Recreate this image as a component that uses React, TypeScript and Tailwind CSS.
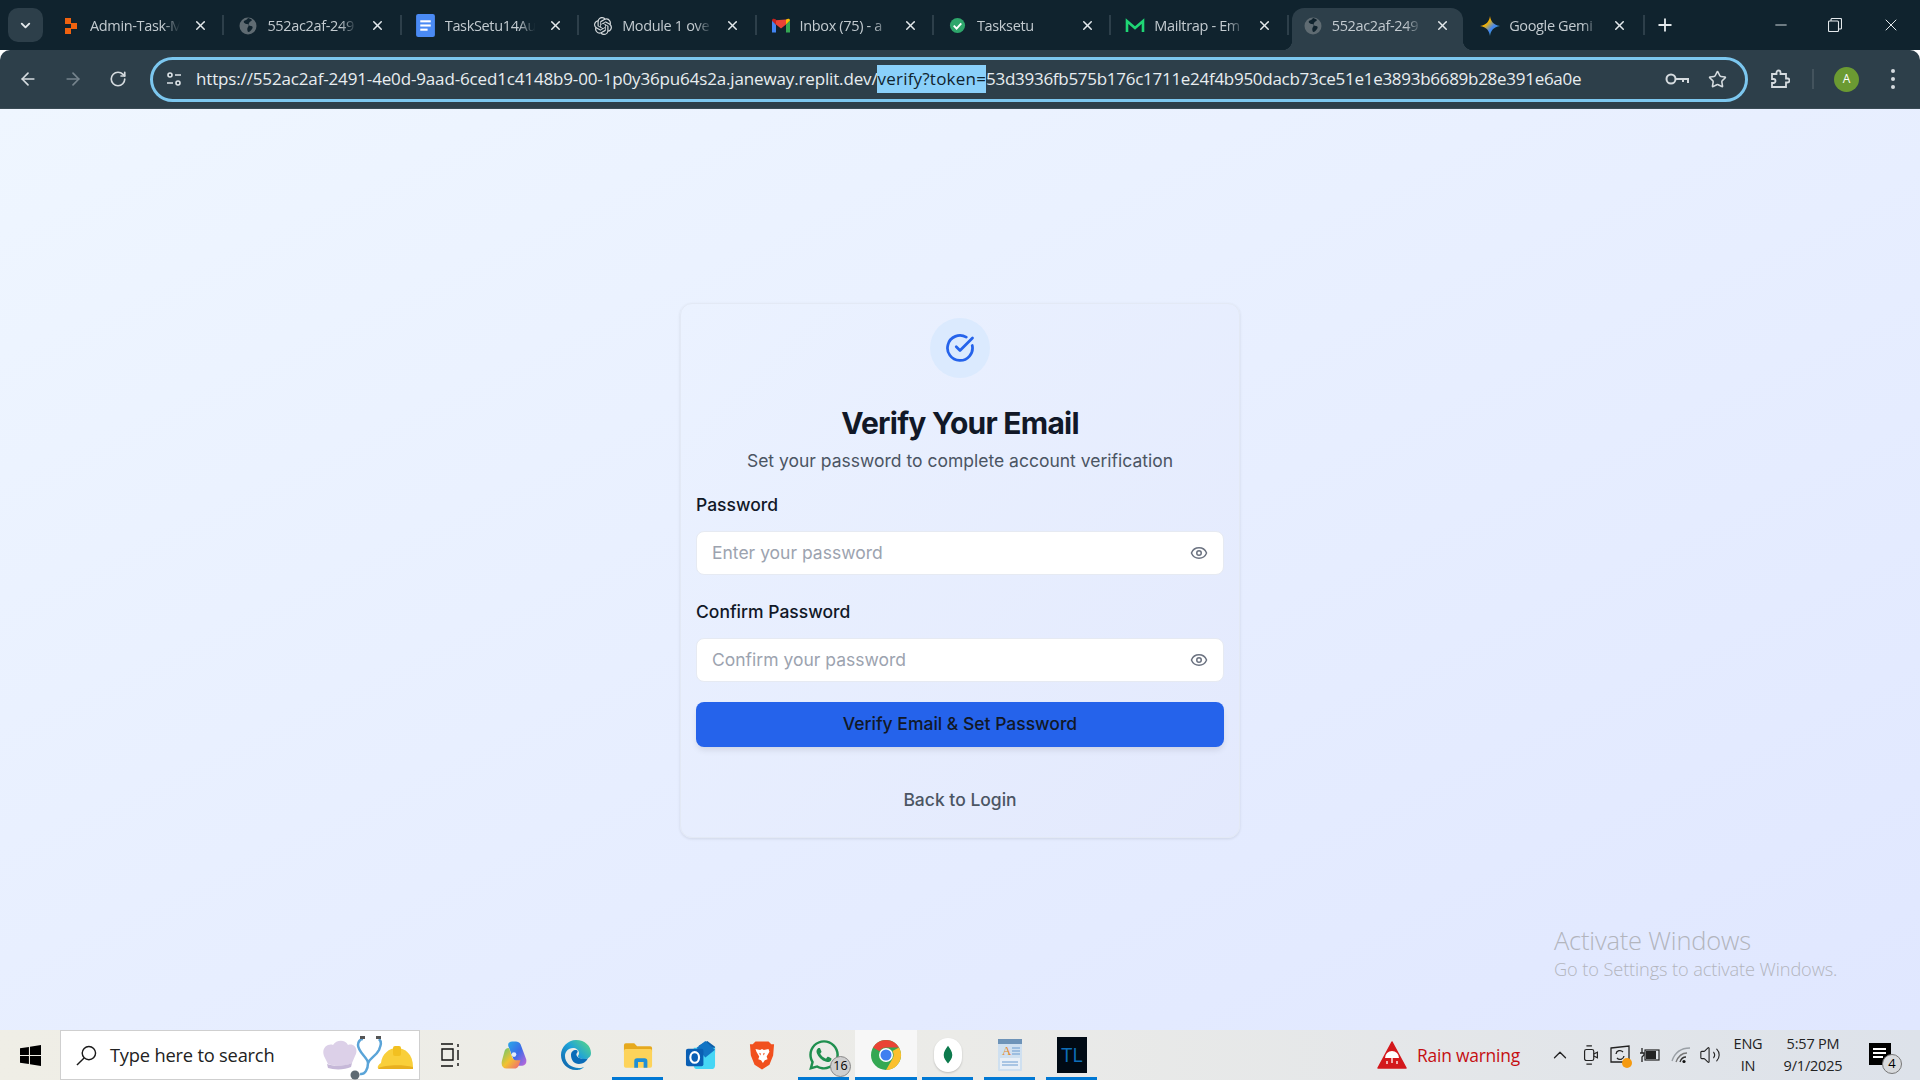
import React from "react";
import { ArrowLeft, ArrowRight, ChevronDown, ChevronUp, CircleCheckBig, Eye, Minus, Plus, RotateCw, Star, X, Volume2 } from "lucide-react";
import { SiOpenai } from "react-icons/si";
import { FaWhatsapp } from "react-icons/fa";

const Globe = () => (
  <svg viewBox="0 0 18 18" className="w-[18px] h-[18px]">
    <circle cx="9" cy="9" r="8.5" fill="#5f6b72" />
    <path d="M9 1c-1 2-3 2-4 3s1 3 3 3 2 2 1 3-1 3 0 5c2 0 3-2 4-3s1-3-1-3-3-1-2-3 3-2 3-3c-1-1-3-2-4-2z" fill="#10232e" />
  </svg>
);
const Asana = () => (
  <svg viewBox="0 0 18 18" className="w-[18px] h-[18px]">
    <rect x="3" y="1" width="6" height="6" fill="#f0620f" />
    <rect x="9" y="6" width="6" height="6" fill="#f0620f" />
    <rect x="3" y="11" width="6" height="6" fill="#f0620f" />
  </svg>
);
const Docs = () => (
  <svg viewBox="0 0 18 22" className="w-[19px] h-[23px]">
    <rect x="0" y="0" width="18" height="22" rx="2" fill="#4a8af4" />
    <rect x="4" y="6" width="10" height="2" fill="#fff" />
    <rect x="4" y="10" width="10" height="2" fill="#fff" />
    <rect x="4" y="14" width="7" height="2" fill="#fff" />
  </svg>
);
const Gmail = () => (
  <svg viewBox="0 0 18 14" className="w-[18px] h-[15px]">
    <path d="M0 2v12h4V6z" fill="#4285f4" />
    <path d="M18 2v12h-4V6z" fill="#34a853" />
    <path d="M0 2l4 4 5 4 5-4V1z" fill="#ea4335" />
    <path d="M14 1v5l4-4c0-2-2-2.500-4-1z" fill="#fbbc04" />
    <path d="M0 2c0-2 2-2.500 4-1v5z" fill="#c5221f" />
  </svg>
);
const Tasksetu = () => (
  <svg viewBox="0 0 18 18" className="w-[17px] h-[17px]">
    <circle cx="9" cy="9" r="8" fill="#2ea66b" />
    <path d="M5 9.200l3 3 5-5.500" stroke="#fff" strokeWidth="2" fill="none" />
  </svg>
);
const Mailtrap = () => (
  <svg viewBox="0 0 20 16" className="w-[20px] h-[16px]">
    <path d="M2 14V3l8 7 8-7v11" stroke="#1fd675" strokeWidth="2.600" fill="none" strokeLinejoin="miter" />
  </svg>
);
const Gemini = () => (
  <svg viewBox="0 0 20 20" className="w-[20px] h-[20px]">
    <defs>
      <linearGradient id="gem" x1="0" y1="0" x2="1" y2="1">
        <stop offset="0" stopColor="#e8453c" />
        <stop offset="0.35" stopColor="#f4b400" />
        <stop offset="0.6" stopColor="#4285f4" />
        <stop offset="1" stopColor="#34a853" />
      </linearGradient>
    </defs>
    <path d="M10 0c.8 5.500 3.500 9 10 10-6.500 1-9.200 4.500-10 10-.8-5.500-3.500-9-10-10 6.500-1 9.200-4.500 10-10z" fill="url(#gem)" />
  </svg>
);

const tabs: { icon: React.ReactNode; title: string; active?: boolean }[] = [
  { icon: <Asana />, title: "Admin-Task-M" },
  { icon: <Globe />, title: "552ac2af-249" },
  { icon: <Docs />, title: "TaskSetu14Au" },
  { icon: <SiOpenai className="w-[18px] h-[18px] text-[#d5dadd]" />, title: "Module 1 ove" },
  { icon: <Gmail />, title: "Inbox (75) - a" },
  { icon: <Tasksetu />, title: "Tasksetu" },
  { icon: <Mailtrap />, title: "Mailtrap - Em" },
  { icon: <Globe />, title: "552ac2af-249", active: true },
  { icon: <Gemini />, title: "Google Gemi" },
];

function Tab({ t, last }: { t: (typeof tabs)[number]; last: boolean }) {
  return (
    <div className="relative w-[177.4px] h-[42px] mt-[8px] flex items-center pl-[14px] pb-[7px]">
      {t.active && (
        <>
          <span className="absolute left-[3px] right-[3px] top-0 bottom-0 bg-[#2d3f4a] rounded-t-[12px]" />
          <span className="absolute left-[-7px] bottom-0 w-[10px] h-[10px] bg-[radial-gradient(circle_at_0_0,transparent_10px,#2d3f4a_10.5px)]" />
          <span className="absolute right-[-7px] bottom-0 w-[10px] h-[10px] bg-[radial-gradient(circle_at_100%_0,transparent_10px,#2d3f4a_10.5px)]" />
        </>
      )}
      <span className="relative w-[20px] flex justify-center shrink-0">{t.icon}</span>
      <span className="relative ml-[9px] w-[94px] whitespace-nowrap text-[14.5px] text-[#c3cbd0] [font-family:'Open_Sans',sans-serif] tracking-[-0.35px] [mask-image:linear-gradient(to_right,black_78%,transparent_96%)]">
        {t.title}
      </span>
      <X className="relative ml-[9px] w-[15px] h-[15px] text-[#e4e9ec]" strokeWidth={2.4} />
      {!last && !t.active && <span className="absolute right-0 top-[7px] h-[20px] w-[2px] bg-[#2d3f4a]" />}
    </div>
  );
}

const Chrome = () => (
  <svg viewBox="0 0 32 32" className="w-[32px] h-[32px]">
    <circle cx="16" cy="16" r="15" fill="#34a853" />
    <path d="M16 1a15 15 0 0 1 13 7.500H16a7.500 7.500 0 0 0-6.500 3.700L3 8.500A15 15 0 0 1 16 1z" fill="#ea4335" />
    <path d="M29 8.500A15 15 0 0 1 16 31l6.500-11.300A7.500 7.500 0 0 0 22.500 12z" fill="#fbc02d" />
    <circle cx="16" cy="16" r="7" fill="#fff" />
    <circle cx="16" cy="16" r="5.500" fill="#3f7ff0" />
  </svg>
);
const Edge = () => (
  <svg viewBox="0 0 32 32" className="w-[32px] h-[32px]">
    <defs>
      <linearGradient id="edg" x1="0" y1="1" x2="1" y2="0">
        <stop offset="0" stopColor="#0c59a4" />
        <stop offset="0.55" stopColor="#1fa3d8" />
        <stop offset="1" stopColor="#5fdc7c" />
      </linearGradient>
    </defs>
    <path d="M16 1c9 0 15 6 15 13 0 4-3 6-7 6-3 0-6-1-6-3 0-1 1-1 1-3 0-3-3-5-6-5-5 0-8 4-8 8 0 7 6 12 14 12 2 0 4-.5 5-1-3 3-6 3-8 3C7 31 1 24 1 16 1 8 8 1 16 1z" fill="url(#edg)" />
    <path d="M11 16c0-3 2-5 5-5 2 0 2 2 1 3-2 2 1 6 7 6 1 0 3 0 4-1-1 3-5 6-9 6-5 0-8-4-8-9z" fill="#0b6cb8" />
  </svg>
);
const Copilot = () => (
  <svg viewBox="0 0 30 32" className="w-[28px] h-[31px]">
    <defs>
      <linearGradient id="cop1" x1="0" y1="0" x2="1" y2="1">
        <stop offset="0" stopColor="#2aa8e8" />
        <stop offset="0.5" stopColor="#3c6be8" />
        <stop offset="1" stopColor="#c868d8" />
      </linearGradient>
      <linearGradient id="cop2" x1="0" y1="0" x2="1" y2="1">
        <stop offset="0" stopColor="#5cc878" />
        <stop offset="0.5" stopColor="#f2c230" />
        <stop offset="1" stopColor="#f0607a" />
      </linearGradient>
    </defs>
    <path d="M13 1h4c2 0 4 1 5 3l6 16c1 4-1 7-4 7h-4c-2 0-3-1-4-3L9 6c-1-3 1-5 4-5z" fill="url(#cop1)" />
    <path d="M9 8c-2 0-3 1-4 3L2 22c-1 5 1 8 5 8h8c3 0 4-1 5-3l2-6h-5c-2 0-3-1-4-3l-2-6C10 9 10 8 9 8z" fill="url(#cop2)" />
    <circle cx="15" cy="15" r="2.500" fill="#fff" opacity="0.85" />
  </svg>
);
const Explorer = () => (
  <svg viewBox="0 0 32 28" className="w-[30px] h-[27px]">
    <path d="M1 3a2 2 0 0 1 2-2h9l3 3h14a2 2 0 0 1 2 2v4H1z" fill="#e6a91e" />
    <rect x="1" y="7" width="30" height="20" rx="2" fill="#fdd35a" />
    <path d="M12 27v-7a3 3 0 0 1 3-3h8a3 3 0 0 1 3 3v7h-4v-6h-6v6z" fill="#1f8fd6" />
  </svg>
);
const Outlook = () => (
  <svg viewBox="0 0 32 32" className="w-[31px] h-[31px]">
    <path d="M14 6l9-5 8 6v6z" fill="#0f5fa8" />
    <path d="M9 8h22v18a4 4 0 0 1-4 4H13a4 4 0 0 1-4-4z" fill="#46d6f5" />
    <path d="M12 8l9-7 10 9-10 8z" fill="#1274c4" />
    <rect x="1" y="9" width="18" height="18" rx="2" fill="#0a5fb4" />
    <ellipse cx="10" cy="18" rx="4.500" ry="5.500" fill="none" stroke="#fff" strokeWidth="2.200" />
  </svg>
);
const Brave = () => (
  <svg viewBox="0 0 28 32" className="w-[26px] h-[31px]">
    <path d="M7 1h14l3 3 3 0-1 12-4 10-8 5-8-5-4-10L1 4l3 0z" fill="#f1501e" />
    <path d="M7 9l5 1 2-1 2 1 5-1 1 3-3 5 1 3-3 1-2 3-2-3-3-1 1-3-3-5z" fill="#fff" />
    <path d="M11 13l2 1-1 2zM17 13l-2 1 1 2z" fill="#f1501e" />
  </svg>
);
const Leaf = () => (
  <div className="w-[28px] h-[34px] rounded-full bg-white flex items-center justify-center shadow-[0_1px_2px_rgba(0,0,0,0.2)]">
    <svg viewBox="0 0 14 26" className="w-[10px] h-[20px]">
      <path d="M7 0c3 4 6 8 6 13s-3 8-6 12c-3-4-6-7-6-12S4 4 7 0z" fill="#0d7a4d" />
    </svg>
  </div>
);
const Notepad = () => (
  <svg viewBox="0 0 26 34" className="w-[26px] h-[34px]">
    <rect x="1" y="1" width="24" height="32" rx="1" fill="#cfe0f0" />
    <rect x="1" y="1" width="24" height="5" fill="#6d93b8" />
    <rect x="3" y="20" width="20" height="11" fill="#e8eff7" />
    <text x="5" y="17" fontSize="13" fill="#e68a2e" fontFamily="Liberation Serif, serif">A</text>
    <path d="M15 10h8M15 13h8M15 16h8M5 24h16M5 27h16" stroke="#6a9bd0" strokeWidth="1" />
  </svg>
);

const Helper = ({ children, w = 62, line, active, cls }: { children?: React.ReactNode; w?: number; line?: boolean; active?: boolean; cls?: string }) => (
  <div className={`relative h-full flex items-center justify-center shrink-0 ${active ? "bg-[#f7f7f7]" : ""} ${cls ?? ""}`} style={{ width: w }}>
    {children}
    {line && <span className={`absolute bottom-0 h-[3px] bg-[#0078d4] ${active ? "left-0 right-0" : "left-[5px] right-[6px]"}`} />}
  </div>
);

const PasswordField = ({ placeholder }: { placeholder: string }) => (
  <div className="h-[44.5px] rounded-[8px] bg-white border border-[#e6eaf2] flex items-center pl-[15px] pr-[15px]">
    <span className="flex-1 text-[17.5px] text-[#9ca3af]">{placeholder}</span>
    <Eye className="w-[18px] h-[18px] text-[#6b7280]" strokeWidth={2} />
  </div>
);

export default function App() {
  return (
    <div className="w-[1920px] h-[1080px] overflow-hidden flex flex-col relative [font-family:Inter,sans-serif]">
      <div className="h-[50px] bg-[#10232e] flex shrink-0">
        <div className="w-[47px] flex items-start pl-[8px] pt-[8px]">
          <div className="w-[35px] h-[34px] rounded-[10px] bg-[#2d3f4a] flex items-center justify-center">
            <ChevronDown className="w-[15px] h-[15px] text-[#e4e9ec]" strokeWidth={3} />
          </div>
        </div>
        {tabs.map((t, i) => (
          <Tab key={i} t={t} last={i === tabs.length - 1} />
        ))}
        <div className="flex items-center h-full ml-[-1px]">
          <span className="w-[2px] h-[20px] bg-[#2d3f4a]" />
          <Plus className="ml-[10px] w-[20px] h-[20px] text-[#e4e9ec]" strokeWidth={2.2} />
        </div>
        <div className="ml-auto flex items-center h-full pr-[19px] text-[#e4e9ec]">
          <Minus className="w-[18px] h-[18px]" strokeWidth={1.2} />
          <svg viewBox="0 0 14 14" className="ml-[38px] w-[14px] h-[14px]" fill="none" stroke="#e4e9ec" strokeWidth="1.1">
            <rect x="0.5" y="3" width="10" height="10.500" rx="1" />
            <path d="M3 3V1.500a1 1 0 0 1 1-1h8.500a1 1 0 0 1 1 1V10a1 1 0 0 1-1 1H11" />
          </svg>
          <X className="ml-[39px] w-[20px] h-[20px]" strokeWidth={1.2} />
        </div>
      </div>

      <div className="h-[59px] bg-[#2d3f4a] rounded-t-[10px] flex items-center shrink-0 border-b border-[#3a4b55]">
        <div className="w-[150px] flex items-center pl-[18px] text-[#d5dbdf]">
          <ArrowLeft className="w-[20px] h-[20px]" strokeWidth={2} />
          <ArrowRight className="ml-[25px] w-[20px] h-[20px] text-[#76848d]" strokeWidth={2} />
          <RotateCw className="ml-[26px] w-[18px] h-[18px]" strokeWidth={2.2} />
        </div>
        <div className="w-[1598px] h-[45px] rounded-full border-[3px] border-[#7cc7ef] flex items-center pl-[13px] pr-[18px]">
          <svg viewBox="0 0 16 16" className="w-[16px] h-[16px] shrink-0" fill="none" stroke="#dde3e7" strokeWidth="1.600">
            <circle cx="4" cy="4" r="2" />
            <path d="M9 4h6M1 12h6" />
            <circle cx="12" cy="12" r="2" />
          </svg>
          <div className="ml-[14px] flex-1 whitespace-nowrap text-[17px] text-[#e8edf0] [font-family:'Open_Sans',sans-serif] flex items-center">
            <span className="tracking-[-0.15px]">https://552ac2af-2491-4e0d-9aad-6ced1c4148b9-00-1p0y36pu64s2a.janeway.replit.dev/</span>
            <span className="bg-[#8ad0fa] text-[#10232e] h-[28px] leading-[28px] tracking-[0.22px]">verify?token=</span>
            <span className="tracking-[-0.28px]">53d3936fb575b176c1711e24f4b950dacb73ce51e1e3893b6689b28e391e6a0e</span>
          </div>
          <svg viewBox="0 0 24 14" className="w-[24px] h-[14px] shrink-0" fill="none" stroke="#d5dbdf" strokeWidth="2">
            <circle cx="6" cy="7" r="4.500" />
            <path d="M11 7h12v4M18 7v3" />
          </svg>
          <Star className="ml-[19px] w-[19px] h-[19px] text-[#d5dbdf] shrink-0" strokeWidth={2} />
        </div>
        <div className="flex-1 flex items-center pl-[22px] text-[#d5dbdf]">
          <svg viewBox="0 0 20 20" className="w-[20px] h-[20px]" fill="none" stroke="#d5dbdf" strokeWidth="1.800">
            <path d="M2 5h4.500V3.500a2 2 0 0 1 4 0V5H16v4.500h1.500a2 2 0 0 1 0 4H16V18H2v-4h1.500a2 2 0 0 0 0-4H2z" />
          </svg>
          <span className="ml-[22px] w-[2px] h-[20px] bg-[#43535d]" />
          <span className="ml-[20px] w-[25px] h-[25px] rounded-full bg-[#6b9a32] text-white text-[12px] flex items-center justify-center [font-family:'Open_Sans',sans-serif]">A</span>
          <span className="ml-[32px] flex flex-col gap-[4px]">
            <i className="block w-[4px] h-[4px] rounded-full bg-[#d5dbdf]" />
            <i className="block w-[4px] h-[4px] rounded-full bg-[#d5dbdf]" />
            <i className="block w-[4px] h-[4px] rounded-full bg-[#d5dbdf]" />
          </span>
        </div>
      </div>

      <main className="flex-1 min-h-0 flex items-center justify-center bg-gradient-to-br from-[#eff6ff] to-[#e0e7ff]">
        <div className="mt-[2px] w-[560px] h-[535px] rounded-[12px] border border-[#e3e9f5] bg-gradient-to-br from-[#ebf2ff] to-[#e3e9fd] shadow-[0_1px_3px_rgba(0,0,0,0.1)] px-[15px] pt-[14px]">
          <div className="mx-auto w-[60px] h-[60px] rounded-full bg-[#dbeafe] flex items-center justify-center">
            <CircleCheckBig className="w-[30px] h-[30px] text-[#2563eb]" strokeWidth={2.2} />
          </div>
          <h1 className="mt-[27px] h-[36px] leading-[36px] text-center text-[30px] font-bold tracking-[-0.75px] text-[#111827]">Verify Your Email</h1>
          <p className="mt-[6px] h-[28px] leading-[28px] text-center text-[17.5px] text-[#4b5563]">Set your password to complete account verification</p>
          <label className="block mt-[18px] h-[24px] leading-[24px] text-[17.5px] font-medium text-[#111827]">Password</label>
          <div className="mt-[13.5px]"><PasswordField placeholder="Enter your password" /></div>
          <label className="block mt-[25px] h-[24px] leading-[24px] text-[17.5px] font-medium text-[#111827]">Confirm Password</label>
          <div className="mt-[13.5px]"><PasswordField placeholder="Confirm your password" /></div>
          <div className="mt-[19.5px] h-[45px] rounded-[8px] bg-[#2563eb] shadow-[0_4px_6px_-1px_rgba(0,0,0,0.1)] flex items-center justify-center text-[17.5px] font-medium text-[#111827]">Verify Email &amp; Set Password</div>
          <div className="mt-[41px] h-[24px] leading-[24px] text-center text-[17.5px] font-medium text-[#4b5563]">Back to Login</div>
        </div>
      </main>

      <div className="absolute left-[1554px] top-[924px] text-[#b3b5bd] [font-family:'Open_Sans',sans-serif] font-light pointer-events-none whitespace-nowrap">
        <div className="text-[25.5px] leading-[32px] tracking-[-0.2px]">Activate Windows</div>
        <div className="text-[18.2px] leading-[26px] tracking-[-0.1px]">Go to Settings to activate Windows.</div>
      </div>

      <div className="h-[50px] shrink-0 flex items-center bg-gradient-to-r from-[#efeee6] via-[#ebebe8] to-[#dde2ea] [font-family:'Open_Sans',sans-serif]">
        <div className="w-[60px] flex justify-center">
          <svg viewBox="0 0 20 20" className="w-[21px] h-[21px]" fill="#000">
            <path d="M0 3l8.500-1.200v7.700H0zM9.500 1.600L20 0v9.500H9.500zM0 10.500h8.500v7.700L0 17zM9.500 10.500H20V20L9.500 18.400z" />
          </svg>
        </div>
        <div className="w-[360px] h-full bg-white border border-[#cfcfcf] flex items-center pl-[15px] relative">
          <svg viewBox="0 0 22 22" className="w-[21px] h-[21px]" fill="none" stroke="#1a1a1a" strokeWidth="1.500">
            <circle cx="13.500" cy="8.500" r="7" />
            <path d="M8.500 13.500L1 21" />
          </svg>
          <span className="ml-[13px] text-[18.3px] text-[#222] tracking-[-0.2px]">Type here to search</span>
          <svg viewBox="0 0 92 46" className="absolute right-[4px] top-[3px] w-[92px] h-[46px]">
            <path d="M1 22c-3-8 4-13 9-11 3-5 12-6 15 0 6-2 11 4 7 11l-3 7c-6 3-17 4-24 1z" fill="#dcd0e8" />
            <path d="M4 30c7 3 18 2 25-1l-1 4c-6 3-17 3-23 1z" fill="#c6b8d8" />
            <path d="M40 5c-3 0-5 3-5 6 0 7 10 13 10 18 0 6-3 12-8 11" fill="none" stroke="#5aa4d8" strokeWidth="2.500" />
            <path d="M56 5c3 3 2 6 0 11-3 6-9 8-11 13" fill="none" stroke="#5aa4d8" strokeWidth="2.500" />
            <circle cx="32" cy="41" r="4.500" fill="#5f6a72" />
            <rect x="37" y="2" width="5" height="3" fill="#555" />
            <rect x="53" y="2" width="5" height="3" fill="#555" />
            <path d="M55 34c-1-1 1-4 3-5 1-9 8-15 16-15s16 6 16 19c0 2-1 2-2 2z" fill="#f9cf3a" />
            <path d="M55 34c6-3 24-4 35-1v2H57c-1 0-2 0-2-1z" fill="#e8b020" />
            <rect x="70" y="12" width="8" height="10" rx="2" fill="#f2c020" />
          </svg>
        </div>
        <Helper w={63} cls="pr-[3px]">
          <svg viewBox="0 0 20 24" className="w-[20px] h-[24px]" fill="none" stroke="#111" strokeWidth="1.400">
            <path d="M1 1h12M1 23h12M2 6h11v11H2zM18 1v3M18 7v10M18 20v3" />
          </svg>
        </Helper>
        <Helper><Copilot /></Helper>
        <Helper><Edge /></Helper>
        <Helper line><Explorer /></Helper>
        <Helper><Outlook /></Helper>
        <Helper><Brave /></Helper>
        <Helper line>
          <div className="relative">
            <FaWhatsapp className="w-[34px] h-[34px] text-[#1f8f4f]" />
            <span className="absolute right-[-10px] bottom-[-5px] w-[21px] h-[21px] rounded-full bg-[#cfcfcf] border border-[#888] text-[12.500px] text-black flex items-center justify-center">16</span>
          </div>
        </Helper>
        <Helper line active><Chrome /></Helper>
        <Helper line><Leaf /></Helper>
        <Helper line><Notepad /></Helper>
        <Helper line>
          <div className="w-[30px] h-[36px] bg-[#000a14] flex items-center justify-center text-[20px] text-[#0e6fb8] leading-none">TL</div>
        </Helper>

        <div className="ml-auto flex items-center h-full">
          <svg viewBox="0 0 30 28" className="w-[30px] h-[28px]">
            <path d="M15 1l14 26H1z" fill="#d3181c" stroke="#d3181c" strokeWidth="1.500" strokeLinejoin="round" />
            <path d="M8 17a7 7 0 0 1 14 0z" fill="#fff" />
            <path d="M15 17v5M10 20v3M20 20v3" stroke="#fff" strokeWidth="1.300" />
          </svg>
          <span className="ml-[10px] w-[124px] text-[17.4px] text-[#c50f12] tracking-[-0.2px]">Rain warning</span>
          <ChevronUp className="ml-[8px] w-[22px] h-[22px] text-[#222]" strokeWidth={1.4} />
          <svg viewBox="0 0 16 24" className="ml-[12px] w-[16px] h-[22px]" fill="none" stroke="#222" strokeWidth="1.300">
            <rect x="1" y="6" width="10" height="12" rx="2" />
            <path d="M11 11l4-2v6l-4-2M3 2h6M3 22h6" />
          </svg>
          <div className="relative ml-[11px]">
            <svg viewBox="0 0 20 20" className="w-[20px] h-[20px]" fill="none" stroke="#222" strokeWidth="1.300">
              <path d="M1 3l18-2v16H1z" />
              <path d="M6 9a4 4 0 0 1 7-2M14 11a4 4 0 0 1-7 2" />
            </svg>
            <span className="absolute right-[-2px] bottom-[-3px] w-[10px] h-[10px] rounded-full bg-[#f59a10]" />
          </div>
          <svg viewBox="0 0 20 16" className="ml-[10px] w-[20px] h-[16px]">
            <rect x="5" y="3" width="14" height="10" fill="none" stroke="#222" strokeWidth="1.200" />
            <rect x="6" y="4" width="10" height="8" fill="#222" />
            <path d="M2 1v5M0 6h4v2l-2 2v5" stroke="#222" strokeWidth="1.300" fill="none" />
          </svg>
          <svg viewBox="0 0 20 18" className="ml-[11px] w-[20px] h-[18px]" fill="none" strokeWidth="1.300">
            <path d="M1 15C4 6 11 2 19 2" stroke="#9aa0a6" />
            <path d="M5 16c2-5 6-9 11-9" stroke="#777" />
            <path d="M9 16c1-3 3-5 6-5" stroke="#333" />
            <circle cx="13" cy="15.500" r="1.600" fill="#111" />
          </svg>
          <Volume2 className="ml-[8px] w-[22px] h-[22px] text-[#222]" strokeWidth={1.2} />
          <div className="ml-[9px] w-[36px] text-center text-[14.500px] leading-[22px] text-[#222] tracking-[-0.2px]">
            <div>ENG</div>
            <div>IN</div>
          </div>
          <div className="ml-[11px] w-[72px] text-center text-[14.500px] leading-[22px] text-[#222] tracking-[-0.2px]">
            <div>5:57 PM</div>
            <div>9/1/2025</div>
          </div>
          <div className="relative ml-[20px] mr-[29px] w-[22px] h-[22px] bg-black -mt-[2px]">
            <span className="absolute left-[4px] top-[5px] w-[13px] h-[2px] bg-white" />
            <span className="absolute left-[4px] top-[9px] w-[13px] h-[2px] bg-white" />
            <span className="absolute left-[4px] top-[13px] w-[10px] h-[2px] bg-white" />
            <span className="absolute right-[-11px] bottom-[-9px] w-[20px] h-[20px] rounded-full bg-[#d8dadd] border border-[#777] text-[13px] text-black flex items-center justify-center">4</span>
          </div>
        </div>
      </div>
    </div>
  );
}
